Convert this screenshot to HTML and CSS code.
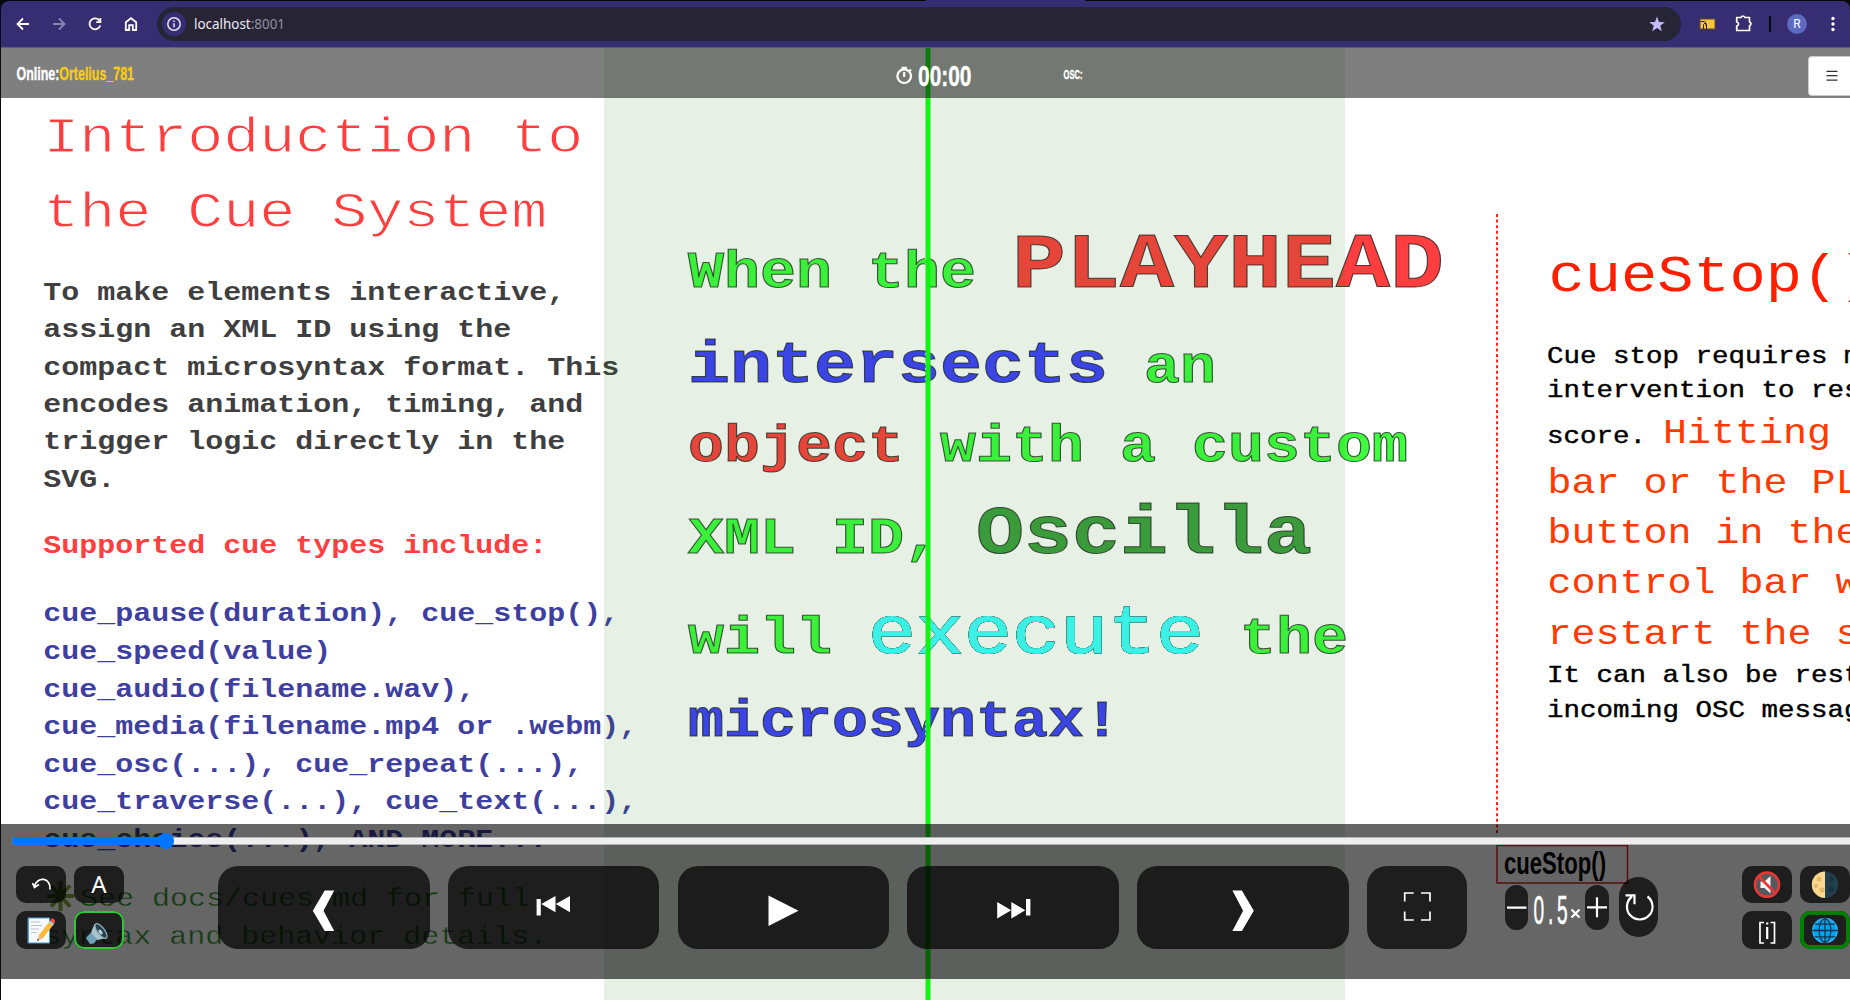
FILE: index.html
```html
<!DOCTYPE html>
<html lang="en">
<head>
<meta charset="utf-8">
<title>Oscilla score</title>
<link rel="stylesheet" href="styles.css">
</head>
<body>
<div class="window">
  <div class="browser">
    <div class="tab-foot"></div>
    <nav class="nav-icons">
      <svg width="16" height="16" viewBox="0 0 16 16"><path d="M14 8H3M8 2.5 2.5 8 8 13.500"/></svg>
      <svg class="dim" width="16" height="16" viewBox="0 0 16 16"><path d="M2 8h11M8 2.500 13.500 8 8 13.500"/></svg>
      <svg width="16" height="16" viewBox="0 0 16 16"><path d="M13.300 9.500A5.500 5.500 0 1 1 12.600 4.700M13.400 2v4.200H9.200"/></svg>
      <svg width="16" height="16" viewBox="0 0 16 16"><path d="M2.800 14V6.200L8 2.200l5.200 4V14H9.800V9.200H6.200V14Z"/></svg>
    </nav>
    <div class="address">
      <span class="site-info"><svg width="16" height="16" viewBox="0 0 16 16"><circle cx="8" cy="8" r="6.200"/><path d="M8 7.200v4M8 4.500v1.500"/></svg></span>
      <svg class="url" width="100" height="24"><text x="0" y="17" textLength="91" lengthAdjust="spacingAndGlyphs">localhost<tspan class="port">:8001</tspan></text></svg>
      <svg class="star" width="18" height="18" viewBox="0 0 18 18"><path d="M9 1.500 11 7l5.800.2-4.600 3.500 1.700 5.600L9 13l-4.900 3.300 1.700-5.600L1.200 7.200 7 7Z"/></svg>
    </div>
    <svg class="ext-icons" width="169" height="34" viewBox="1681 7 169 34">
      <rect x="1700" y="19" width="15" height="10" fill="#f9c440" stroke="#5b4a1c"/>
      <path d="M1700.500 21.500h4q1.500.5 1.500 2.500v2M1703.500 29v-4.500q1.500-3 3 0V29" fill="none" stroke="#222"/>
      <path d="M1736.700 17.500h4.200q2-3 4.200 0h4.400v4.300q3 2 0 4.200v4.500h-12.800v-4.200q3.800-2.300 0-4.600Z" fill="none" stroke="#fff" stroke-width="1.700" stroke-linejoin="round"/>
      <rect x="1769" y="16" width="2" height="16" fill="#0b0815"/>
      <circle cx="1797" cy="24" r="10" fill="#5c6bc0"/>
      <text x="1797" y="28" text-anchor="middle" class="avatar">R</text>
      <g fill="#fff"><circle cx="1833" cy="18.500" r="1.700"/><circle cx="1833" cy="24" r="1.700"/><circle cx="1833" cy="29.500" r="1.700"/></g>
    </svg>
  </div>

  <main class="stage">
    <svg class="score" width="1850" height="952" viewBox="0 48 1850 952">
      <g class="mono title">
        <text x="43.200" y="152" textLength="540" lengthAdjust="spacingAndGlyphs">Introduction to</text>
        <text x="43.200" y="227" textLength="504" lengthAdjust="spacingAndGlyphs">the Cue System</text>
      </g>
      <g class="mono body">
        <text x="43.200" y="299.500" textLength="522" lengthAdjust="spacingAndGlyphs">To make elements interactive,</text>
        <text x="43.200" y="337" textLength="468" lengthAdjust="spacingAndGlyphs">assign an XML ID using the</text>
        <text x="43.200" y="374.500" textLength="576" lengthAdjust="spacingAndGlyphs">compact microsyntax format. This</text>
        <text x="43.200" y="411.500" textLength="540" lengthAdjust="spacingAndGlyphs">encodes animation, timing, and</text>
        <text x="43.200" y="449.200" textLength="522" lengthAdjust="spacingAndGlyphs">trigger logic directly in the</text>
        <text x="43.200" y="486.500" textLength="72" lengthAdjust="spacingAndGlyphs">SVG.</text>
        <text class="red" x="43.200" y="552.500" textLength="504" lengthAdjust="spacingAndGlyphs">Supported cue types include:</text>
        <g class="navy">
          <text x="43.200" y="621.400" textLength="576" lengthAdjust="spacingAndGlyphs">cue_pause(duration), cue_stop(),</text>
          <text x="43.200" y="658.700" textLength="288" lengthAdjust="spacingAndGlyphs">cue_speed(value)</text>
          <text x="43.200" y="696.500" textLength="432" lengthAdjust="spacingAndGlyphs">cue_audio(filename.wav),</text>
          <text x="43.200" y="733.700" textLength="594" lengthAdjust="spacingAndGlyphs">cue_media(filename.mp4 or .webm),</text>
          <text x="43.200" y="771.700" textLength="540" lengthAdjust="spacingAndGlyphs">cue_osc(...), cue_repeat(...),</text>
          <text x="43.200" y="808.700" textLength="594" lengthAdjust="spacingAndGlyphs">cue_traverse(...), cue_text(...),</text>
          <text x="43.200" y="846.500" textLength="504" lengthAdjust="spacingAndGlyphs">cue_choice(...), AND MORE...</text>
        </g>
      </g>
      <path class="sparkle" d="M60.500 881v30M47 896h27M51 885.500l19 21M70 885.500l-19 21"/>
      <g class="mono note">
        <text x="80" y="905.700" textLength="450" lengthAdjust="spacingAndGlyphs">See docs/cues.md for full</text>
        <text x="43.200" y="944" textLength="504" lengthAdjust="spacingAndGlyphs">syntax and behavior details.</text>
      </g>

      <g class="mono quote">
        <text class="s60" x="688" y="287" textLength="288" lengthAdjust="spacingAndGlyphs">When the</text>
        <text class="s90 red" x="1012" y="287" textLength="432" lengthAdjust="spacingAndGlyphs">PLAYHEAD</text>
        <text class="s70 blue" x="688" y="382" textLength="420" lengthAdjust="spacingAndGlyphs">intersects</text>
        <text class="s60" x="1144" y="382" textLength="72" lengthAdjust="spacingAndGlyphs">an</text>
        <text class="s60 red" x="688" y="461" textLength="216" lengthAdjust="spacingAndGlyphs">object</text>
        <text class="s60" x="940" y="461" textLength="468" lengthAdjust="spacingAndGlyphs">with a custom</text>
        <text class="s60" x="688" y="553" textLength="252" lengthAdjust="spacingAndGlyphs">XML ID,</text>
        <text class="s80 forest" x="976" y="553" textLength="336" lengthAdjust="spacingAndGlyphs">Oscilla</text>
        <text class="s60" x="688" y="653" textLength="144" lengthAdjust="spacingAndGlyphs">will</text>
        <text class="s80 cyan" x="868" y="653" textLength="336" lengthAdjust="spacingAndGlyphs">execute</text>
        <text class="s60" x="1240" y="653" textLength="108" lengthAdjust="spacingAndGlyphs">the</text>
        <text class="s60 blue" x="688" y="736" textLength="432" lengthAdjust="spacingAndGlyphs">microsyntax!</text>
      </g>

      <path class="cue-line" d="M1497 214V834"/>
      <rect class="cue-box" x="1497" y="845.500" width="130.500" height="37.500"/>
      <text class="narrow cue-name" x="1504" y="873.500" textLength="102" lengthAdjust="spacingAndGlyphs">cueStop()</text>
      <g class="mono">
        <text class="stop-title" x="1548.500" y="291" textLength="326" lengthAdjust="spacingAndGlyphs">cueStop()</text>
        <g class="stop-body">
          <text x="1547" y="362.500" textLength="313.500" lengthAdjust="spacingAndGlyphs">Cue stop requires m</text>
          <text x="1547" y="397" textLength="313.500" lengthAdjust="spacingAndGlyphs">intervention to res</text>
          <text x="1547" y="443" textLength="99" lengthAdjust="spacingAndGlyphs">score.</text>
          <text x="1547" y="682" textLength="313.500" lengthAdjust="spacingAndGlyphs">It can also be rest</text>
          <text x="1547" y="716.500" textLength="313.500" lengthAdjust="spacingAndGlyphs">incoming OSC messag</text>
        </g>
        <g class="stop-hot">
          <text x="1663" y="443" textLength="168" lengthAdjust="spacingAndGlyphs">Hitting</text>
          <text x="1547.500" y="493" textLength="312" lengthAdjust="spacingAndGlyphs">bar or the PL</text>
          <text x="1547.500" y="543" textLength="312" lengthAdjust="spacingAndGlyphs">button in the</text>
          <text x="1547.500" y="593" textLength="312" lengthAdjust="spacingAndGlyphs">control bar w</text>
          <text x="1547.500" y="643.500" textLength="312" lengthAdjust="spacingAndGlyphs">restart the s</text>
        </g>
      </g>
      <rect class="zone" x="604" y="48" width="741" height="952"/>
      <rect class="playhead" x="925.500" y="48" width="5" height="952"/>
      <path class="playhead-edge" d="M925.500 48V1000"/>
    </svg>

    <header class="topbar">
      <svg class="status narrow" width="130" height="50"><text x="0.500" y="31.500" textLength="117.500" lengthAdjust="spacingAndGlyphs">Online:<tspan class="user">Ortelius_781</tspan></text></svg>
      <svg class="clock narrow" width="80" height="50" viewBox="895 48 80 50">
        <circle cx="904.200" cy="76.200" r="6.800"/><path d="M904.200 72v5M901.500 67.800h5.400M904.200 67v3M909.500 69.500l1.500 1.500"/>
        <text x="918" y="86" textLength="53.500" lengthAdjust="spacingAndGlyphs">00:00</text>
      </svg>
      <svg class="osc narrow" width="24" height="50"><text x="0.500" y="31" textLength="19" lengthAdjust="spacingAndGlyphs">OSC:</text></svg>
      <button class="menu"><svg width="12" height="12" viewBox="0 0 12 12"><path d="M.5 1.300h11M.5 5.700h11M.5 10.200h11"/></svg></button>
    </header>

    <footer class="controls">
      <div class="seek"><div class="seek-fill"></div><div class="seek-thumb"></div></div>
      <div class="row">
        <div class="grid">
          <button class="mini"><svg viewBox="0 0 50 37"><path class="ln thin" d="M34 23.500C35 11 21 10 18.500 20.500M16.500 17l2 4.500 4.500-3"/></svg></button>
          <button class="mini"><svg viewBox="0 0 50 37"><text class="letter" x="25" y="27" text-anchor="middle">A</text></svg></button>
          <button class="mini"><svg viewBox="0 0 50 37">
            <rect x="11.500" y="5.500" width="22.500" height="26" rx="1" fill="#4a9bd8"/><rect x="13" y="6.500" width="20" height="24" fill="#f6f8fa"/>
            <path d="M15 10h9M15 13.500h11M15 17h8M15 20.500h6" stroke="#b9c2c9" stroke-width="1"/>
            <path d="M21 29l2-6L34 9l4 3-11 14Z" fill="#fcb934"/><path d="M34 9l4 3 1-2q0-3-3-4Z" fill="#ef5350"/><path d="M32.800 10.500l4 3 1.200-1.500-4-3Z" fill="#9ed3f2"/><path d="M21 29l2-6 4 3Z" fill="#e9c18c"/><path d="M21 29l.8-2 1.400 1Z" fill="#222"/></svg></button>
          <button class="mini on"><svg viewBox="0 0 50 37">
            <path d="M12 26l4-4.500 4-1.500 4 6-4 5.500-4 .5Z" fill="#6fa3b8"/><path d="M17 20.500l3.500-8.500 12 14-9 2Z" fill="#a8c3cf"/><ellipse cx="27" cy="19" rx="3.600" ry="8.800" transform="rotate(-38 27 19)" fill="#26404c" stroke="#8fb0be" stroke-width="1.300"/><ellipse cx="26.500" cy="20" rx="1.600" ry="2.800" transform="rotate(-38 26.500 20)" fill="#b9ced6"/></svg></button>
        </div>
        <div class="transport">
          <button class="key"><svg viewBox="0 0 211.600 83"><path class="fl" d="M106.700 24.500h9.500L105.500 44.700l10.700 20.300h-9.500L94.800 44.700Z"/></svg></button>
          <button class="key"><svg viewBox="0 0 211.600 83"><path class="fl" d="M88.600 33h4.200v16.500h-4.200ZM107.500 30v16.300L93.300 38ZM122 30v16.300L107.800 38Z"/></svg></button>
          <button class="key"><svg viewBox="0 0 211.600 83"><path class="fl" d="M90.500 29.500v30.500l30-15.200Z"/></svg></button>
          <button class="key"><svg viewBox="0 0 211.600 83"><path class="fl" d="M90.200 36v16.600l14-8.300ZM104.300 36v16.600l14-8.300ZM119 33h4.400v16.500H119Z"/></svg></button>
          <button class="key"><svg viewBox="0 0 211.600 83"><path class="fl" d="M104.900 24.500h-9.500L106.100 44.700 95.400 65h9.500l11.900-20.300Z"/></svg></button>
          <button class="key square"><svg viewBox="0 0 100 83"><path class="ln thin" d="M37.700 35.500V27h9M54 27h9v8.500M37.700 45.500V54h9M54 54h9v-8.500"/></svg></button>
        </div>
        <div class="speed">
          <button class="pill"><svg viewBox="0 0 23.500 45"><path class="ln" d="M2 22.700h19.500"/></svg></button>
          <svg class="rate" width="50" height="45" viewBox="1532 885 50 45"><text x="1533.500" y="924" textLength="38" lengthAdjust="spacingAndGlyphs">0.5</text><path class="ln" d="M1571.500 909.500l8 8M1579.500 909.500l-8 8"/></svg>
          <button class="pill"><svg viewBox="0 0 23.500 45"><path class="ln" d="M2 22.300h20M12 12.300v20"/></svg></button>
          <button class="pill tall"><svg viewBox="0 0 39 60"><path class="ln" d="M28.500 19.500A12.800 12.800 0 1 1 13 19.500M6.500 18.300h9v9"/></svg></button>
        </div>
        <div class="grid end">
          <button class="mini"><svg viewBox="0 0 50 37"><circle cx="25" cy="18.700" r="12" fill="#55585c"/><path d="M18.500 15.500h4l6-5.500v17.500l-6-5.500h-4Z" fill="#f4f4f4"/><circle cx="25" cy="18.700" r="12" fill="none" stroke="#e53935" stroke-width="2.700"/><path d="M16.500 10.200l17 17" stroke="#e53935" stroke-width="2.700"/></svg></button>
          <button class="mini"><svg viewBox="0 0 50 37"><circle cx="25" cy="18.700" r="13.200" fill="#233f4e"/><path d="M25 5.500a13.200 13.200 0 0 0 0 26.400Z" fill="#fbd790"/><g fill="#e3b867"><circle cx="19" cy="13" r="2.500"/><circle cx="16" cy="20" r="2"/><circle cx="22" cy="24" r="2.500"/></g><g fill="#183341"><circle cx="31" cy="13" r="2.500"/><circle cx="31" cy="23" r="3"/></g></svg></button>
          <button class="mini"><svg viewBox="0 0 50 37"><path class="ln thin" d="M22 10.500h-4V31h4M28.500 10.500h4V31h-4"/><path class="ln" d="M25.200 15v12M25.200 10.500v2"/></svg></button>
          <button class="mini globe"><svg viewBox="0 0 50 38"><circle cx="25" cy="19" r="13.200" fill="#00a1f1"/><g fill="none" stroke="#133344" stroke-width="1.300"><circle cx="25" cy="19" r="12.300" stroke="#35b6f7"/><ellipse cx="25" cy="19" rx="6" ry="12.300"/><path d="M25 6v26M12 19h26M14.500 12.500h21M14.500 25.500h21"/></g></svg></button>
        </div>
      </div>
    </footer>
  </main>
</div>
</body>
</html>
```
FILE: styles.css
```css
* { box-sizing: border-box; }
body { margin: 0; background: #08070c; overflow: hidden; }
button { border: 0; margin: 0; padding: 0; display: block; flex: none; font: inherit; }
svg { display: block; flex: none; }
.window { width: 1850px; height: 1000px; overflow: hidden; display: flex; flex-direction: column; border-left: 1px solid #0a090f; }

/* browser toolbar */
.browser { position: relative; height: 47px; flex: none; margin-top: 1px; width: 1849px; display: flex; align-items: center; background: #372d73; border-bottom: 1px solid #61598f; border-radius: 8px 8px 0 0; }
.tab-foot { position: absolute; left: 925px; top: -1px; width: 159px; height: 1px; background: #372d73; }
.nav-icons { display: flex; gap: 20px; padding-left: 14px; width: 156px; }
.nav-icons path { fill: none; stroke: #fff; stroke-width: 1.8; }
.nav-icons .dim { opacity: .42; }
.address { width: 1524px; height: 34px; border-radius: 17px; background: #262435; display: flex; align-items: center; padding: 0 15px 0 5px; }
.site-info { width: 24px; height: 24px; border-radius: 50%; background: #372d73; display: grid; place-items: center; }
.site-info svg { fill: none; stroke: #e6e3f5; stroke-width: 1.5; }
.url { margin-left: 8px; font: 15px "Noto Sans", sans-serif; fill: #eceaf5; }
.url .port { fill: #918fa0; }
.star { margin-left: auto; fill: #c6bbff; }
.avatar { font: 12px Roboto, sans-serif; fill: #fff; }

/* score canvas */
.stage { position: relative; width: 1849px; height: 952px; background: #fff; overflow: hidden; }
.score { margin-left: -1px; }
.mono { font-family: "Liberation Mono", monospace; }
.title { font-size: 50px; fill: #ff3f3f; stroke: #fff; stroke-width: 1px; }
.body { font-size: 25px; font-weight: bold; fill: #3f3f3f; }
.body .red { fill: #ff3f3f; }
.body .navy { fill: #3f3f9f; }
.note { font-size: 25px; fill: #2f8f2f; stroke: #fff; stroke-width: .3px; }
.sparkle { fill: none; stroke: #84a03a; stroke-width: 4; }
.quote { font-weight: bold; fill: #3fff3f; stroke: rgba(20, 20, 20, .75); stroke-width: 1px; }
.s60 { font-size: 51px; }
.s70 { font-size: 60px; }
.s80 { font-size: 68px; }
.s90 { font-size: 77px; }
.quote .red { fill: #ff3f3f; }
.quote .blue { fill: #3f3fff; }
.quote .forest { fill: #3f9f3f; }
.quote .cyan { fill: #3fffff; stroke: #3fffff; font-weight: normal; filter: drop-shadow(0 0 .6px #111) drop-shadow(0 0 .3px #333); }
.stop-title { font-size: 51px; fill: #ff1e00; }
.stop-body { font-size: 23px; fill: #000; stroke: #000; stroke-width: .4px; }
.stop-hot { font-size: 35px; fill: #ff3a00; }
.cue-line { stroke: #f22; stroke-width: 2; stroke-dasharray: 3 2.6; }
.cue-box { fill: none; stroke: #e02020; stroke-width: 1.5; }
.zone { fill: rgba(35, 124, 22, .112); }
.playhead { fill: #0cf50c; opacity: .97; }
.playhead-edge { stroke: #8adf8a; stroke-width: 1; stroke-dasharray: 2 3; }
.narrow { font-family: "Liberation Sans", Arial, sans-serif; font-weight: bold; }
.cue-name { font-size: 32px; fill: #000; }

/* header strip */
.topbar { position: absolute; inset: 0 0 auto 0; height: 50px; background: rgba(0, 0, 0, .5); display: flex; align-items: center; padding-left: 15px; }
.topbar text { fill: #fff; stroke: #fff; stroke-width: .4px; }
.status { font-size: 19px; }
.topbar .user { fill: #f9cb15; stroke: #f9cb15; }
.clock { margin-left: 749px; font-size: 29px; }
.clock circle, .clock path { fill: none; stroke: #fff; stroke-width: 2.2; }
.osc { margin-left: 88px; font-size: 13px; }
.menu { margin-left: auto; width: 42px; height: 40px; background: #fff; border: 1px solid #ccc; border-right: 0; border-radius: 4px 0 0 4px; padding-left: 17px; margin-top: 6px; }
.menu path { stroke: #333; stroke-width: 1.3; }

/* transport panel */
.controls { position: absolute; left: 0; right: 0; top: 776px; height: 155px; background: rgba(0, 0, 0, .6); }
.seek { position: relative; margin: 13px 0 0 11px; height: 8px; border: 1px solid #b2b2b2; border-right: 0; border-radius: 4px 0 0 4px; background: #efefef; }
.seek-fill { margin: -1px; width: 160px; height: 8px; border-radius: 4px; background: #0075ff; }
.seek-thumb { position: absolute; left: 145px; top: -5px; width: 16px; height: 16px; border-radius: 50%; background: #0075ff; }
.row { display: flex; align-items: flex-start; margin-top: 21px; padding-left: 15px; }
.grid { display: grid; grid-template-columns: 50px 50px; grid-template-rows: 37px 38px; gap: 8px; }
.mini, .key, .pill { background: rgba(0, 0, 0, .7); overflow: hidden; }
.mini { border-radius: 10px; display: grid; place-items: center; }
.mini svg { width: 50px; height: 37px; }
.on { box-shadow: inset 0 0 0 2px #2fc934; }
.globe { box-shadow: inset 0 0 0 4px #008000; }
.letter { font: 24px "Noto Sans", sans-serif; fill: #fff; }
.transport { display: flex; gap: 18.2px; margin-left: 94px; }
.key { width: 211.6px; height: 83px; border-radius: 20px; }
.square { width: 100px; }
.key svg, .pill svg { width: 100%; height: 100%; }
.fl { fill: #fff; }
.ln { fill: none; stroke: #fff; stroke-width: 2.2; }
.ln.thin { stroke-width: 1.7; }
.speed { display: flex; margin: 11px 0 0 38px; }
.pill { width: 23.5px; height: 45px; border-radius: 12px; margin-top: 12px; }
.rate { margin: 8px 3px 0 4px; font: 40px "Liberation Sans", Arial, sans-serif; letter-spacing: 8px; fill: #fff; stroke: #fff; stroke-width: .6px; }
.speed .pill { margin-top: 8px; }
.speed .tall { width: 39px; height: 60px; border-radius: 20px; margin: 0 0 0 10px; }
.end { margin-left: 84px; }
```
